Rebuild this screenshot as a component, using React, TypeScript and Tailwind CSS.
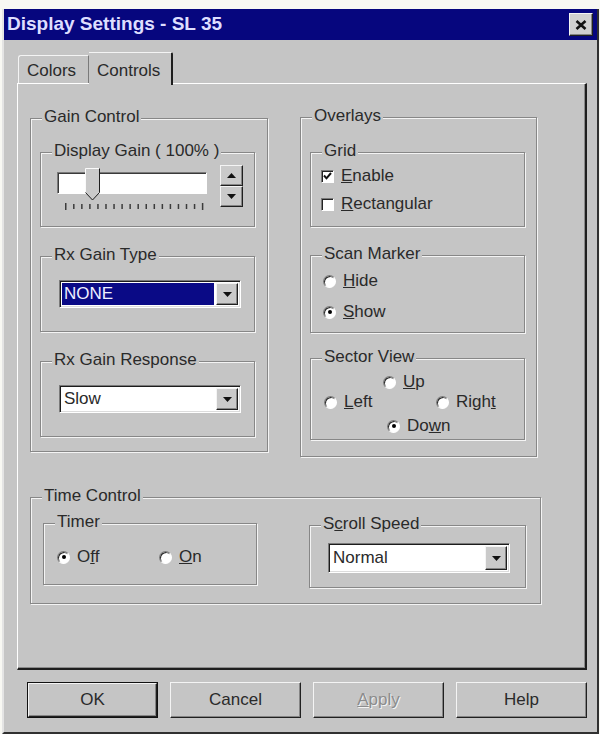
import type { ReactNode } from 'react';

const raised =
  'border border-t-[#f4f4f4] border-l-[#f4f4f4] border-b-[#202020] border-r-[#202020] shadow-[inset_-1px_-1px_0_#858585]';
const sunken =
  'border border-t-[#7a7a7a] border-l-[#7a7a7a] border-b-white border-r-white';

function GroupBox({ label, className = '', children }: { label: ReactNode; className?: string; children?: ReactNode }) {
  return (
    <div className={`relative border border-[#878787] shadow-[1px_1px_0_#f4f4f4,inset_1px_1px_0_#f4f4f4] ${className}`}>
      <span className="absolute left-[11px] top-[-12px] whitespace-nowrap bg-[#c5c5c5] px-[2px] leading-[20px]">
        {label}
      </span>
      {children}
    </div>
  );
}

function DropArrow({ up = false }: { up?: boolean }) {
  return (
    <svg width="9" height="5" viewBox="0 0 9 5">
      <path d={up ? 'M0 5h9L4.5 0z' : 'M0 0h9L4.5 5z'} fill="#111" />
    </svg>
  );
}

function Combo({ value, selected = false, className = '' }: { value: string; selected?: boolean; className?: string }) {
  return (
    <div className={`flex w-[182px] bg-white p-[2px] shadow-[inset_1px_1px_0_#1c1c1c,inset_-1px_-1px_0_#dcdcdc] ${sunken} ${className}`}>
      <div className={`mr-[2px] flex flex-1 items-center pl-[2px] ${selected ? 'bg-[#0a0a86] text-[#eeeeff]' : 'text-[#2a2a2a]'}`}>
        {value}
      </div>
      <div className={`flex w-[22px] items-center justify-center bg-[#cacaca] ${raised}`}>
        <DropArrow />
      </div>
    </div>
  );
}

function Radio({ checked = false }: { checked?: boolean }) {
  return (
    <span className={`flex h-[13px] w-[13px] shrink-0 items-center justify-center rounded-full bg-white shadow-[inset_1px_1px_0_#2a2a2a] ${sunken}`}>
      {checked && <span className="h-[4px] w-[4px] rounded-full bg-black" />}
    </span>
  );
}

function CheckBox({ checked = false }: { checked?: boolean }) {
  return (
    <span className={`flex h-[13px] w-[13px] shrink-0 items-center justify-center bg-white shadow-[inset_1px_1px_0_#222] ${sunken}`}>
      {checked && (
        <svg width="9" height="8" viewBox="0 0 9 8">
          <path d="M1 3.5l2.5 2.8L8 1" fill="none" stroke="#111" strokeWidth="2" />
        </svg>
      )}
    </span>
  );
}

function Option({ control, children, className = '' }: { control: ReactNode; children: ReactNode; className?: string }) {
  return (
    <div className={`flex h-[20px] items-center gap-[7px] ${className}`}>
      {control}
      <span className="whitespace-nowrap">{children}</span>
    </div>
  );
}

function Slider() {
  const ticks = Array.from({ length: 18 }, (_, i) => 8 + i * 8.05);
  return (
    <div className="relative h-[46px] w-[150px]">
      <div className={`mt-[7px] h-[22px] w-[150px] bg-white shadow-[inset_1px_1px_0_#3a3a3a] ${sunken}`} />
      <svg className="absolute left-[28px] top-[3px]" width="16" height="33" viewBox="0 0 16 33">
        <path d="M0.5 0.5h14v24l-7 7.5l-7-7.5z" fill="#cacaca" />
        <path d="M0.5 25V0.5h14" fill="none" stroke="#fafafa" />
        <path d="M14.5 0.5v24l-7 7.5l-7-7.5" fill="none" stroke="#1e1e1e" />
      </svg>
      <svg className="mt-[9px]" width="150" height="7" viewBox="0 0 150 7">
        {ticks.map((x, i) => (
          <rect key={i} x={x} y={i === 0 || i === 17 ? 0 : 1} width="1.5" height={i === 0 || i === 17 ? 7 : 5} fill="#3c3c3c" />
        ))}
      </svg>
    </div>
  );
}

function Spin() {
  return (
    <div className="flex w-[23px] flex-col">
      <div className={`flex h-[21px] items-center justify-center bg-[#cacaca] ${raised}`}>
        <DropArrow up />
      </div>
      <div className={`flex h-[21px] items-center justify-center bg-[#cacaca] ${raised}`}>
        <DropArrow />
      </div>
    </div>
  );
}

function Button({ label, primary = false, disabled = false }: { label: ReactNode; primary?: boolean; disabled?: boolean }) {
  return (
    <div className={`w-[131px] ${primary ? 'border border-[#111]' : ''}`}>
      <div
        className={`flex items-center justify-center bg-[#c5c5c5] ${primary ? 'h-[34px]' : 'h-[36px]'} ${raised} ${
          disabled ? 'text-[#8c8c8c] [text-shadow:1px_1px_0_#f4f4f4]' : 'text-[#2a2a2a]'
        }`}
      >
        {label}
      </div>
    </div>
  );
}

export default function App() {
  return (
    <div className="h-[734px] w-[600px] bg-[#f8f8f3] pl-[2px] pt-[9px] font-['Liberation_Sans',Arial,sans-serif] text-[17px] text-[#2a2a2a]">
      <div className="flex h-[725px] w-[597px] flex-col border-b-2 border-l-2 border-r-2 border-b-[#303030] border-l-[#e4e4e4] border-r-[#303030] bg-[#c5c5c5]">
        {/* title bar */}
        <div className="flex h-[31px] items-center justify-between bg-[#06067e] pl-[3px] pr-[4px]">
          <span className="text-[19px] font-bold text-[#dedeff]">Display Settings - SL 35</span>
          <div className={`flex h-[23px] w-[24px] items-center justify-center bg-[#d0d0d0] ${raised}`}>
            <svg width="12" height="10" viewBox="0 0 12 10">
              <path d="M1.5 1l9 8M10.5 1l-9 8" stroke="#111" strokeWidth="2.6" />
            </svg>
          </div>
        </div>

        {/* tabs */}
        <div className="ml-[14px] mt-[12px] flex h-[31px] items-end">
          <div className="flex h-[28px] w-[71px] items-center rounded-tl-[3px] border-l border-r border-t border-l-[#f4f4f4] border-r-[#7a7a7a] border-t-[#f4f4f4] pl-[8px] pt-[3px]">
            Colors
          </div>
          <div className="relative z-10 flex h-[33px] w-[84px] items-start self-start rounded-tr-[2px] border-r-2 border-t border-r-[#1e1e1e] border-t-[#f4f4f4] bg-[#c5c5c5] pl-[8px] pt-[5px]">
            Controls
          </div>
        </div>

        {/* panel */}
        <div className="ml-[13px] h-[587px] w-[570px] border-b-2 border-l border-r-2 border-t border-b-[#1e1e1e] border-l-white border-r-[#1e1e1e] border-t-white pl-[12px] pt-[34px] shadow-[inset_-1px_-1px_0_#8a8a8a]">
          <div className="flex items-start gap-[32px]">
            <GroupBox label="Gain Control" className="h-[334px] w-[238px] pl-[9px] pt-[33px]">
              <GroupBox label="Display Gain ( 100% )" className="flex h-[75px] w-[215px] gap-[13px] pl-[16px] pt-[12px]">
                <Slider />
                <Spin />
              </GroupBox>
              <GroupBox label="Rx Gain Type" className="mt-[29px] h-[76px] w-[215px] pl-[18px] pt-[23px]">
                <Combo value="NONE" selected className="h-[28px]" />
              </GroupBox>
              <GroupBox label="Rx Gain Response" className="mt-[29px] h-[76px] w-[215px] pl-[18px] pt-[23px]">
                <Combo value="Slow" className="h-[28px]" />
              </GroupBox>
            </GroupBox>

            <GroupBox label="Overlays" className="-mt-[1px] h-[340px] w-[237px] pl-[9px] pt-[34px]">
              <GroupBox label="Grid" className="flex h-[75px] w-[215px] flex-col gap-[8px] pl-[10px] pt-[13px]">
                <Option control={<CheckBox checked />}>
                  <u>E</u>nable
                </Option>
                <Option control={<CheckBox />}>
                  <u>R</u>ectangular
                </Option>
              </GroupBox>
              <GroupBox label="Scan Marker" className="mt-[28px] flex h-[78px] w-[215px] flex-col gap-[11px] pl-[12px] pt-[15px]">
                <Option control={<Radio />}>
                  <u>H</u>ide
                </Option>
                <Option control={<Radio checked />}>
                  <u>S</u>how
                </Option>
              </GroupBox>
              <GroupBox label="Sector View" className="mt-[25px] h-[82px] w-[215px] pt-[13px]">
                <Option control={<Radio />} className="pl-[72px]">
                  <u>U</u>p
                </Option>
                <div className="flex">
                  <Option control={<Radio />} className="w-[125px] pl-[13px]">
                    <u>L</u>eft
                  </Option>
                  <Option control={<Radio />}>
                    Righ<u>t</u>
                  </Option>
                </div>
                <Option control={<Radio checked />} className="mt-[4px] pl-[76px]">
                  Do<u>w</u>n
                </Option>
              </GroupBox>
            </GroupBox>
          </div>

          <GroupBox label="Time Control" className="mt-[40px] flex h-[107px] w-[511px] items-start">
            <GroupBox label="Timer" className="ml-[12px] mt-[25px] flex h-[62px] w-[214px] pl-[13px] pt-[23px]">
              <Option control={<Radio checked />} className="w-[102px]">
                O<u>f</u>f
              </Option>
              <Option control={<Radio />}>
                <u>O</u>n
              </Option>
            </GroupBox>
            <GroupBox
              label={
                <>
                  S<u>c</u>roll Speed
                </>
              }
              className="ml-[52px] mt-[27px] h-[63px] w-[217px] pl-[18px] pt-[17px]"
            >
              <Combo value="Normal" className="h-[30px]" />
            </GroupBox>
          </GroupBox>
        </div>

        {/* buttons */}
        <div className="ml-[23px] mt-[12px] flex gap-[12px]">
          <Button label="OK" primary />
          <Button label="Cancel" />
          <Button
            label={
              <>
                <u>A</u>pply
              </>
            }
            disabled
          />
          <Button label="Help" />
        </div>
      </div>
    </div>
  );
}
